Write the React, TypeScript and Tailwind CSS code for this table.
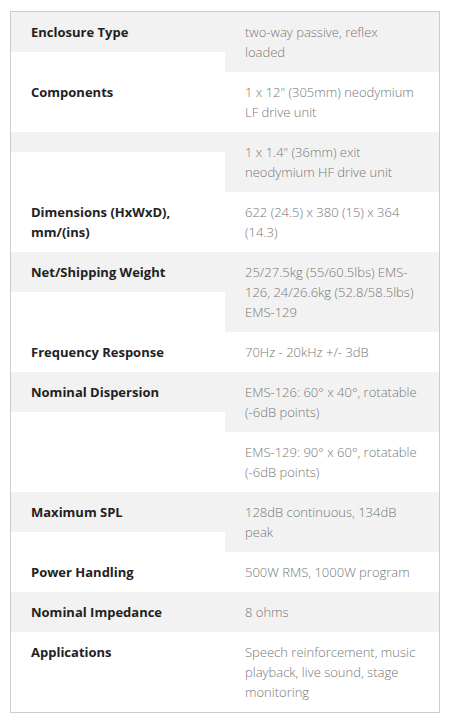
import React from "react";

const rows: [string, string][] = [
  ["Enclosure Type", "two-way passive, reflex loaded"],
  ["Components", "1 x 12\" (305mm) neodymium LF drive unit"],
  ["", "1 x 1.4\" (36mm) exit neodymium HF drive unit"],
  ["Dimensions (HxWxD), mm/(ins)", "622 (24.5) x 380 (15) x 364 (14.3)"],
  ["Net/Shipping Weight", "25/27.5kg (55/60.5lbs) EMS-126, 24/26.6kg (52.8/58.5lbs) EMS-129"],
  ["Frequency Response", "70Hz - 20kHz +/- 3dB"],
  ["Nominal Dispersion", "EMS-126: 60° x 40°, rotatable (-6dB points)"],
  ["", "EMS-129: 90° x 60°, rotatable (-6dB points)"],
  ["Maximum SPL", "128dB continuous, 134dB peak"],
  ["Power Handling", "500W RMS, 1000W program"],
  ["Nominal Impedance", "8 ohms"],
  ["Applications", "Speech reinforcement, music playback, live sound, stage monitoring"],
];

export default function App() {
  return (
    <div
      className="bg-white min-h-[725px] pt-[11px] pl-[10px]"
      style={{ fontFamily: '"Open Sans", sans-serif' }}
    >
      <div className="w-[430px] border border-[#cccccc] text-[13px] leading-[20px]">
        {rows.map(([label, value], i) => {
          const bg = i % 2 === 0 ? "bg-[#f2f2f2]" : "bg-white";
          return (
            <div key={i} className="flex items-start">
              <div className={`w-1/2 px-5 py-[10px] font-bold text-[#222222] ${bg}`}>
                {label}
              </div>
              <div className={`w-1/2 px-5 py-[10px] font-light text-[#777777] ${bg}`}>{value}</div>
            </div>
          );
        })}
      </div>
    </div>
  );
}
